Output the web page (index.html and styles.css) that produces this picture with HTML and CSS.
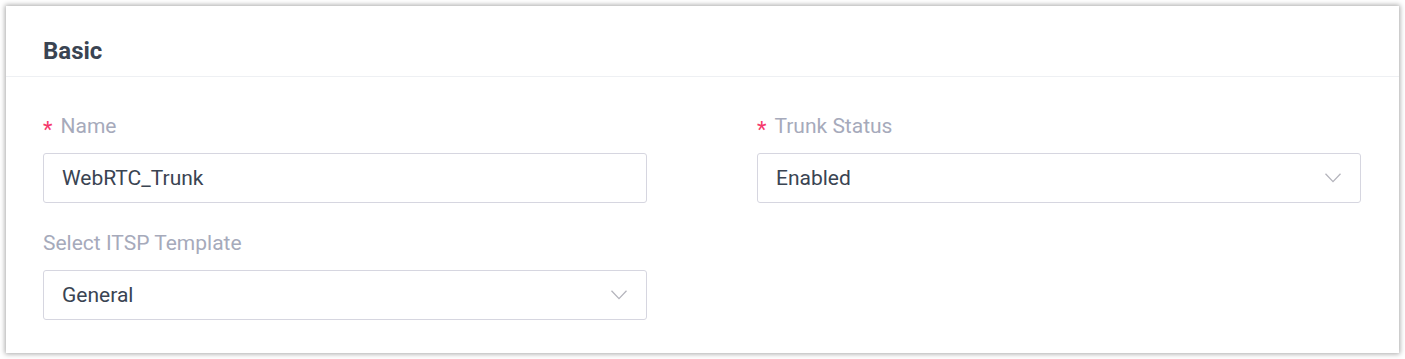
FILE: index.html
```html
<!DOCTYPE html>
<html>
<head>
<meta charset="utf-8">
<title>Basic</title>
<link rel="stylesheet" href="styles.css">
</head>
<body>
<div class="card">
  <div class="card-head">Basic</div>
  <div class="card-body">
    <div class="field">
      <div class="label"><span class="req">*</span>Name</div>
      <div class="input">WebRTC_Trunk</div>
    </div>
    <div class="field">
      <div class="label"><span class="req">*</span>Trunk Status</div>
      <div class="input select">
        <span>Enabled</span>
        <svg class="arrow" width="16" height="10" viewBox="0 0 16 10"><path d="M0.5 0.8 L8 8.6 L15.5 0.8" fill="none" stroke="#b4b4bc" stroke-width="1.3"/></svg>
      </div>
    </div>
    <div class="field">
      <div class="label">Select ITSP Template</div>
      <div class="input select">
        <span>General</span>
        <svg class="arrow" width="16" height="10" viewBox="0 0 16 10"><path d="M0.5 0.8 L8 8.6 L15.5 0.8" fill="none" stroke="#b4b4bc" stroke-width="1.3"/></svg>
      </div>
    </div>
  </div>
</div>
</body>
</html>
```

FILE: styles.css
```css
* {
    margin: 0;
    padding: 0;
    box-sizing: border-box;
}
html, body {
    background: #fff;
    font-family: Roboto, "Liberation Sans", sans-serif;
}
body {
    padding: 6px;
}
.card {
    width: 1393px;
    height: 347px;
    background: #fff;
    box-shadow: 0 0 5px 1px rgba(0, 0, 0, 0.34);
}
.card-head {
    height: 71px;
    padding: 20px 37px 0;
    border-bottom: 1px solid #eef0f3;
    display: flex;
    align-items: center;
    font-size: 24px;
    font-weight: 700;
    color: #3a4452;
}
.card-body {
    display: grid;
    grid-template-columns: 604px 604px;
    column-gap: 110px;
    row-gap: 26px;
    padding: 35px 37px 0;
}
.label {
    font-size: 21px;
    line-height: 28px;
    color: #a6aabb;
    margin-bottom: 13px;
}
.req {
    color: #f53a6c;
    margin-right: 8px;
    font-size: 22px;
    position: relative;
    top: 4px;
}
.input {
    height: 50px;
    border: 1px solid #d6d6e0;
    border-radius: 3px;
    padding: 0 18px;
    display: flex;
    align-items: center;
    font-size: 21px;
    color: #3a4452;
}
.select {
    justify-content: space-between;
}
.arrow {
    margin-right: 1px;
}
```
